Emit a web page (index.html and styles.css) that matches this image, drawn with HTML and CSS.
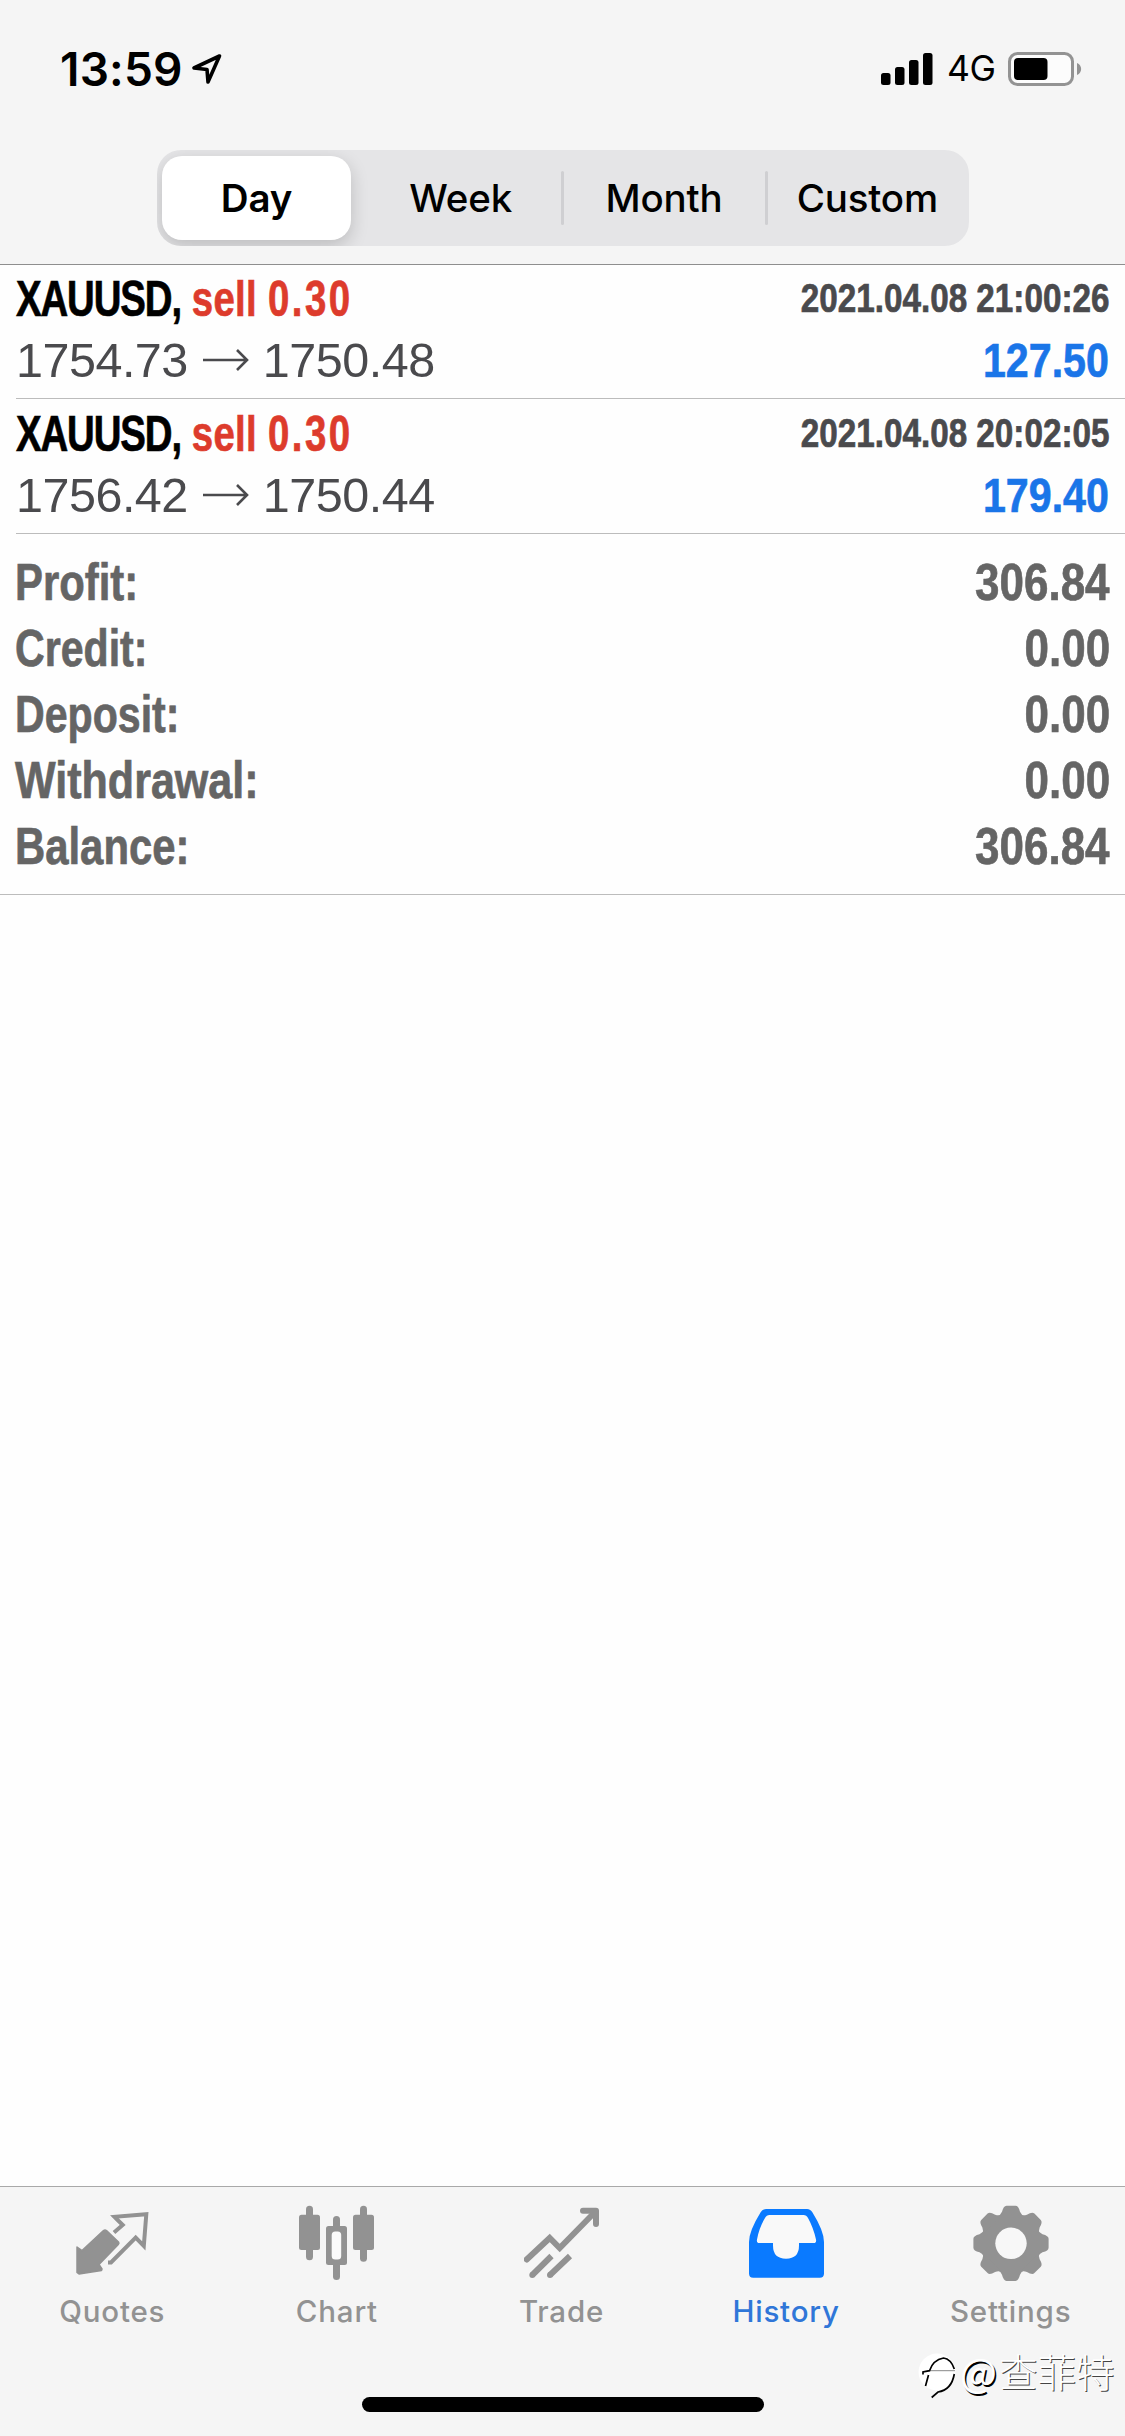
FILE: index.html
```html
<!DOCTYPE html>
<html lang="en">
<head>
<meta charset="utf-8">
<title>History</title>
<link rel="stylesheet" href="styles.css">
</head>
<body>
<div class="app">
  <header class="header">
    <div class="status">
      <div class="status-left">
        <span class="time">13:59</span>
        <svg class="location" width="32" height="32" viewBox="0 0 32 32"><path d="M28.500 3 L3 15 L16 16.500 L17 29 Z" fill="none" stroke="#000" stroke-width="3.600" stroke-linejoin="round"/></svg>
      </div>
      <div class="status-right">
        <svg width="52" height="34" viewBox="0 0 52 34"><rect x="0" y="21" width="9.500" height="12" rx="2.500"/><rect x="14" y="15" width="9.500" height="18" rx="2.500"/><rect x="28" y="8" width="9.500" height="25" rx="2.500"/><rect x="42" y="1" width="9.500" height="32" rx="2.500"/></svg>
        <span class="network">4G</span>
        <svg width="74" height="34" viewBox="0 0 74 34"><rect x="1.500" y="1.500" width="63" height="31" rx="8" fill="#fcfcfc" stroke="#939393" stroke-width="3"/><rect x="6" y="6" width="33.500" height="22" rx="4"/><path d="M69 11 C74.500 13 74.500 21 69 23 Z" fill="#939393"/></svg>
      </div>
    </div>
    <nav class="segments">
      <span class="segment active">Day</span>
      <span class="segment">Week</span>
      <span class="segment divided">Month</span>
      <span class="segment divided">Custom</span>
    </nav>
  </header>

  <main class="content">
    <section class="deal">
      <div class="line title">
        <span class="cond symbol-line"><span class="symbol">XAUUSD,</span> <span class="side">sell <span class="lots">0.30</span></span></span>
        <span class="cond date">2021.04.08 21:00:26</span>
      </div>
      <div class="line quote">
        <span class="prices">1754.73<svg class="arrow" width="46" height="24" viewBox="0 0 46 24"><path d="M0 12 H44 M34 2 L44 12 L34 22" fill="none" stroke="#4a4a4d" stroke-width="2.600"/></svg>1750.48</span>
        <span class="cond profit">127.50</span>
      </div>
    </section>
    <section class="deal">
      <div class="line title">
        <span class="cond symbol-line"><span class="symbol">XAUUSD,</span> <span class="side">sell <span class="lots">0.30</span></span></span>
        <span class="cond date">2021.04.08 20:02:05</span>
      </div>
      <div class="line quote">
        <span class="prices">1756.42<svg class="arrow" width="46" height="24" viewBox="0 0 46 24"><path d="M0 12 H44 M34 2 L44 12 L34 22" fill="none" stroke="#4a4a4d" stroke-width="2.600"/></svg>1750.44</span>
        <span class="cond profit">179.40</span>
      </div>
    </section>
    <section class="summary">
      <div class="total"><span class="cond label">Profit:</span><span class="cond value">306.84</span></div>
      <div class="total"><span class="cond label narrow">Credit:</span><span class="cond value">0.00</span></div>
      <div class="total"><span class="cond label narrow">Deposit:</span><span class="cond value">0.00</span></div>
      <div class="total"><span class="cond label wide">Withdrawal:</span><span class="cond value">0.00</span></div>
      <div class="total"><span class="cond label">Balance:</span><span class="cond value">306.84</span></div>
    </section>
  </main>

  <footer class="tabbar">
    <nav class="tabs">
      <div class="tab">
        <svg width="75" height="76" viewBox="0 0 75 76"><path d="M2 42 L7 45.500 L28.500 25.500 Q30 24.300 31.500 25.500 L43.500 37 Q44.500 38.300 43.300 39.500 L24 59.500 L27 64 L26.500 65.500 L4 69 L2 67.500 Z" fill="#929292" stroke="#929292" stroke-width="1.500" stroke-linejoin="round"/><path d="M39 27.500 L47.700 20 L39.500 11.800 L71.300 9.300 L68.800 41 L60.700 32.700 L36 57.500 H33" fill="none" stroke="#929292" stroke-width="4"/></svg>
        <span>Quotes</span>
      </div>
      <div class="tab">
        <svg width="75" height="76" viewBox="0 0 75 76" fill="#929292"><rect x="7" y="0.700" width="7" height="54.500" rx="3.500"/><rect x="0" y="9.700" width="21" height="35.300" rx="2.500"/><rect x="34" y="11" width="7" height="64" rx="3.500"/><rect x="27" y="21" width="21" height="39" rx="2.500"/><rect x="32.700" y="26.500" width="9.500" height="28" rx="3.500" fill="#fafafa"/><rect x="61" y="0.700" width="7" height="56" rx="3.500"/><rect x="54" y="9.700" width="21" height="35.300" rx="2.500"/></svg>
        <span>Chart</span>
      </div>
      <div class="tab">
        <svg width="75" height="76" viewBox="0 0 75 76" fill="none" stroke="#929292" stroke-width="6"><path d="M2.700 54.500 L25.700 33 L35.700 43 L71 7" stroke-linecap="round"/><path d="M59 5.800 H72 V19" stroke-linecap="round" stroke-linejoin="round"/><path d="M8.300 70 L27.500 51 M26 70 L46 51"/><g fill="#929292" stroke="none"><circle cx="8.300" cy="70" r="3"/><circle cx="26" cy="70" r="3"/></g></svg>
        <span>Trade</span>
      </div>
      <div class="tab selected">
        <svg width="75" height="76" viewBox="0 0 75 76"><path d="M17 4 H58 Q61.500 4 63.500 7.500 Q75 26 75 37 V68.500 Q75 72.700 70.800 72.700 H4.200 Q0 72.700 0 68.500 V37 Q0 26 11.500 7.500 Q13.500 4 17 4 Z" fill="#0a7aff"/><path d="M20.500 10 H54.500 Q57.500 10 59 13 Q64.500 23 67 34.500 Q67.700 38 64.500 38 H50 V40.500 Q50 53.700 37 53.700 Q24 53.700 24 40.500 V38 H10.500 Q7.300 38 8 34.500 Q10 23 16 13 Q17.500 10 20.500 10 Z" fill="#f9f9f9"/></svg>
        <span>History</span>
      </div>
      <div class="tab">
        <svg width="76" height="76" viewBox="-38 -38.300 76 76" fill="#929292">
          <defs><path id="tooth" d="M-14 -26.500 Q-10.500 -28 -9 -31.500 Q-7.500 -37.600 -4.500 -37.600 H4.500 Q7.500 -37.600 9 -31.500 Q10.500 -28 14 -26.500 Z"/></defs>
          <circle r="29.500"/>
          <use href="#tooth"/><use href="#tooth" transform="rotate(45)"/><use href="#tooth" transform="rotate(90)"/><use href="#tooth" transform="rotate(135)"/><use href="#tooth" transform="rotate(180)"/><use href="#tooth" transform="rotate(225)"/><use href="#tooth" transform="rotate(270)"/><use href="#tooth" transform="rotate(315)"/>
          <circle r="15.700" fill="#f7f7f7"/>
        </svg>
        <span>Settings</span>
      </div>
    </nav>
    <div class="home"></div>
    <div class="watermark">
      <svg width="42" height="52" viewBox="0 0 42 52"><circle cx="20" cy="24" r="18.500" fill="#fff"/><path d="M12.500 22.700 H38" stroke="#888" stroke-width="1"/><path d="M6 26.500 V24 L12.500 22.700 Q16 12 26.500 10 Q34 11 37.300 21 M11.500 27 L8.500 38" fill="none" stroke="#000" stroke-width="1.700"/><path d="M37.300 26 Q34.500 42 21 44 L14.700 49.500" fill="none" stroke="#000" stroke-width="1.700"/></svg>
      <span class="at">@</span><span class="name">查菲特</span>
    </div>
  </footer>
</div>
</body>
</html>
```
FILE: styles.css
```css
* { box-sizing: border-box; }

body {
  margin: 0;
  background: #fefefe;
  font-family: Inter, "Liberation Sans", sans-serif;
  color: #000;
}

.app {
  width: 1125px;
  height: 2436px;
  display: flex;
  flex-direction: column;
  overflow: hidden;
}

/* header */
.header {
  height: 265px;
  background: #f5f5f5;
  border-bottom: 1px solid #8e8e8e;
}

.status {
  height: 150px;
  padding: 46px 43px 0 60px;
  display: flex;
  justify-content: space-between;
  align-items: flex-start;
}

.status-left,
.status-right {
  height: 46px;
  display: flex;
  align-items: center;
}

.time {
  width: 131px;
  font-size: 46px;
  font-weight: 600;
  line-height: 46px;
  letter-spacing: 0.2px;
}

.network {
  width: 75px;
  padding-left: 14px;
  font-size: 35.5px;
  line-height: 48px;
  letter-spacing: -0.5px;
}

.segments {
  width: 812px;
  height: 96px;
  margin-left: 157px;
  padding: 6px 0 6px 5px;
  display: flex;
  border-radius: 24px;
  background: #e5e5e7;
  overflow: hidden;
}

.segment {
  flex: 1 1 0;
  position: relative;
  display: flex;
  align-items: center;
  justify-content: center;
  font-size: 38.5px;
  font-weight: 450;
  letter-spacing: -0.2px;
}

.segment.active {
  flex: 0 0 189px;
  margin-right: 8px;
  border-radius: 20px;
  background: #fff;
  font-weight: 560;
  box-shadow: 0 6px 18px rgba(0, 0, 0, 0.18);
}

.segment.divided::before {
  content: "";
  position: absolute;
  left: -1px;
  top: 15px;
  width: 3px;
  height: 54px;
  border-radius: 2px;
  background: #cfcfd2;
}

/* condensed bold face */
.cond {
  font-family: "Liberation Sans", sans-serif;
  font-weight: 700;
  white-space: nowrap;
  transform-origin: left center;
  -webkit-text-stroke: 0.7px currentColor;
}

.content { flex: 1; }

.deal {
  height: 135px;
  margin-left: 16px;
  padding-right: 16px;
  border-bottom: 1px solid #bcbcbc;
}

.deal:first-child { height: 134px; }
.deal + .deal { padding-top: 1px; }

.line {
  display: flex;
  justify-content: space-between;
  align-items: flex-start;
}

.title { height: 64px; line-height: 67px; }
.quote { height: 60px; line-height: 63px; }

.symbol-line { font-size: 49.5px; transform: scaleX(0.775); }
.symbol { letter-spacing: -1.4px; }
.side { color: #dd3b2c; letter-spacing: 0.4px; }
.lots { letter-spacing: 3.2px; }

.date {
  font-size: 40px;
  color: #4a4a4d;
  transform: scaleX(0.831);
  transform-origin: right center;
}

.prices {
  font-family: "Liberation Sans", sans-serif;
  font-size: 48.5px;
  color: #4a4a4d;
  letter-spacing: -0.5px;
}

.arrow { margin: 0 14px 0 15px; vertical-align: 5px; }

.profit {
  font-size: 49px;
  color: #1a75e8;
  transform: scaleX(0.84);
  transform-origin: right center;
}

.summary {
  height: 361px;
  padding: 15px 15px 0 15px;
  border-bottom: 1px solid #bcbcbc;
}

.total {
  height: 66px;
  display: flex;
  justify-content: space-between;
  font-size: 52.5px;
  line-height: 66px;
  color: #656565;
}

.label { transform: scaleX(0.797); }
.label.narrow { transform: scaleX(0.783); }
.label.wide { transform: scaleX(0.82); }
.value { transform: scaleX(0.838); transform-origin: right center; }

/* tab bar */
.tabbar {
  position: relative;
  height: 250px;
  background: #f5f5f5;
  border-top: 1px solid #a9a9a9;
}

.tabs {
  height: 210px;
  padding-top: 18px;
  display: flex;
}

.tab {
  flex: 1 1 0;
  display: flex;
  flex-direction: column;
  align-items: center;
  gap: 12px;
  color: #929292;
  font-size: 29.5px;
  font-weight: 500;
  line-height: 36px;
  letter-spacing: 0.8px;
}

.tabs { padding-right: 2px; }

.tab svg { display: block; }
.selected { color: #2f76d8; }

.home {
  width: 402px;
  height: 15px;
  margin-left: 362px;
  border-radius: 8px;
  background: #000;
}

.watermark {
  position: absolute;
  left: 917px;
  top: 161px;
  display: flex;
  align-items: flex-start;
  font-family: "Noto Sans CJK SC", sans-serif;
  color: #fff;
  line-height: 44px;
  white-space: nowrap;
}

.at {
  font-size: 39px;
  width: 40px;
  padding-left: 1px;
  text-shadow: 1.5px 1.5px 0 #000;
}

.name {
  font-size: 38.5px;
  font-weight: 300;
  text-shadow: 1px 1px 0 #444;
}
```
